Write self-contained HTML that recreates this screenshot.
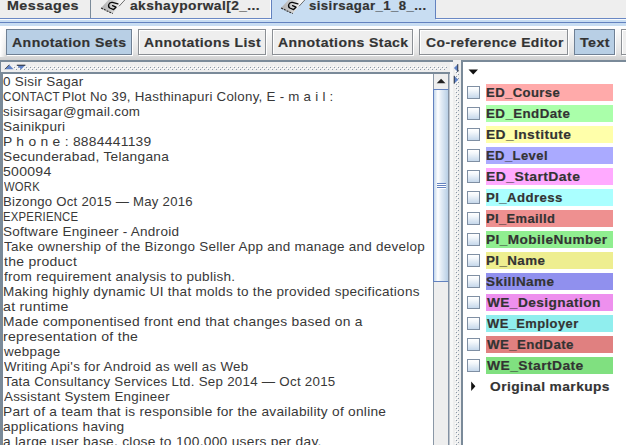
<!DOCTYPE html>
<html>
<head>
<meta charset="utf-8">
<title>GATE</title>
<style>
html,body{margin:0;padding:0;}
html{width:626px;height:445px;overflow:hidden;}
#root{position:absolute;left:0;top:0;width:626px;height:445px;overflow:hidden;background:#eeeeee;}
body{width:626px;height:445px;overflow:hidden;background:#eeeeee;position:relative;font-family:"Liberation Sans",sans-serif;color:#333;}
.abs{position:absolute;}
/* tabs */
.tabbar{position:absolute;left:0;top:0;width:626px;height:18px;background:#eeeeee;}
.tabtxt{position:absolute;-webkit-text-stroke:0.18px #333;top:-3px;font-weight:bold;font-size:13.0px;line-height:18px;white-space:nowrap;color:#333;letter-spacing:0.4px;transform-origin:0 0;}
/* buttons */
.btn{position:absolute;top:29px;height:26px;box-sizing:border-box;border:1px solid #8b8f94;background:#eeeeee;box-shadow:inset 1px 1px 0 #ffffff,1px 1px 0 #ffffff;}
.btn.sel{background:#b8cfe5;border-color:#6f8094;box-shadow:1px 1px 0 #ffffff;}
.btxt{position:absolute;-webkit-text-stroke:0.18px #333;top:33px;font-weight:bold;font-size:13.0px;line-height:18px;white-space:nowrap;color:#333;letter-spacing:0.4px;transform-origin:0 0;}
/* text */
.ln{position:absolute;left:3px;font-size:12.6px;line-height:15px;height:15px;white-space:pre;color:#383838;letter-spacing:0.25px;transform-origin:0 0;}
/* right list */
.cb{position:absolute;left:467px;width:13px;height:13px;box-sizing:border-box;border:1px solid #7f8fa3;background:linear-gradient(#ffffff 0,#f3f7fb 30%,#c6d8eb 100%);}
.lab{position:absolute;left:486px;width:127px;height:17px;}
.ltxt{position:absolute;-webkit-text-stroke:0.18px #333;left:487px;font-weight:bold;font-size:13.0px;line-height:17px;white-space:nowrap;color:#333;letter-spacing:0.4px;transform-origin:0 0;}
</style>
</head>
<body>
<div id="root">
<!-- TAB BAR -->
<div class="tabbar"></div>
<div class="abs" style="left:90px;top:0;width:1px;height:18px;background:#7a8a99;"></div>
<div class="abs" style="left:0;top:18px;width:626px;height:1px;background:#6a88c4;"></div>
<div class="abs" style="left:0;top:19px;width:626px;height:1px;background:#f6f9fd;"></div>
<div class="abs" style="left:0;top:20px;width:626px;height:2px;background:#c8ddf2;"></div>
<div class="abs" style="left:270px;top:0;width:1px;height:18px;background:#ffffff;"></div>
<div class="abs" style="left:271px;top:0;width:165px;height:22px;background:#c8ddf2;"></div>
<div class="abs" style="left:271px;top:0;width:1px;height:19px;background:#6382bf;"></div>
<div class="abs" style="left:435px;top:0;width:1px;height:19px;background:#6382bf;"></div>
<div class="abs" style="left:0;top:22px;width:626px;height:1px;background:#6382bf;"></div>
<div class="abs" style="left:0;top:23px;width:626px;height:3px;background:#c8ddf2;"></div>
<!-- toolbar bg -->
<div class="abs" style="left:0;top:26px;width:626px;height:34px;background:linear-gradient(#ffffff 0,#fbfbfb 10%,#e4e4e4 78%,#cecece 100%);"></div>
<div class="abs" style="left:0;top:26px;width:6px;height:31px;background:linear-gradient(90deg,#ffffff 0,rgba(255,255,255,0) 100%);"></div>
<div class="tabtxt" style="left:6.90px;top:-3px;transform:scaleX(1.1016);">Messages</div>
<div class="tabtxt" style="left:130.00px;top:-3px;transform:scaleX(1.0590);">akshayporwal[2_...</div>
<div class="tabtxt" style="left:308.80px;top:-3px;transform:scaleX(1.0160);">sisirsagar_1_8_...</div>
<!-- doc icons -->
<svg class="abs" style="left:98px;top:0;" width="32" height="17" viewBox="98 0 32 17">
<defs><linearGradient id="ig" gradientUnits="userSpaceOnUse" x1="101" y1="8" x2="124" y2="9"><stop offset="0" stop-color="#adadad"/><stop offset="0.5" stop-color="#d2d2d2"/><stop offset="0.75" stop-color="#efefef"/><stop offset="1" stop-color="#ffffff"/></linearGradient></defs>
<polygon points="101.1,8.1 112.7,13.5 126.2,-1.6 114.6,-7" fill="url(#ig)"/>
<line x1="119" y1="6.3" x2="126.2" y2="-1.6" stroke="#5a5a5a" stroke-width="0.9"/>
<line x1="101.1" y1="8.1" x2="112.7" y2="13.5" stroke="#2a2a2a" stroke-width="1.1" stroke-dasharray="2.1,0.9"/>
<path d="M 117.9 3.8 L 112.5 2.4 Q 109.6 1.9 108.7 4.6 Q 108.1 7.0 109.9 8.0 L 113.6 9.6 L 116.0 7.2 L 112.6 5.6" fill="none" stroke="#0a0a0a" stroke-width="1.35" stroke-linejoin="round" stroke-linecap="round"/>
</svg>
<svg class="abs" style="left:278px;top:0;" width="32" height="17" viewBox="98 0 32 17">
<polygon points="101.1,8.1 112.7,13.5 126.2,-1.6 114.6,-7" fill="url(#ig)"/>
<line x1="119" y1="6.3" x2="126.2" y2="-1.6" stroke="#5a5a5a" stroke-width="0.9"/>
<line x1="101.1" y1="8.1" x2="112.7" y2="13.5" stroke="#2a2a2a" stroke-width="1.1" stroke-dasharray="2.1,0.9"/>
<path d="M 117.9 3.8 L 112.5 2.4 Q 109.6 1.9 108.7 4.6 Q 108.1 7.0 109.9 8.0 L 113.6 9.6 L 116.0 7.2 L 112.6 5.6" fill="none" stroke="#0a0a0a" stroke-width="1.35" stroke-linejoin="round" stroke-linecap="round"/>
</svg>

<!-- BUTTON ROW -->
<div class="btn sel" style="left:6px;width:126px;"></div>
<div class="btn" style="left:138px;width:128px;"></div>
<div class="btn" style="left:272px;width:141px;"></div>
<div class="btn" style="left:419px;width:149px;"></div>
<div class="btn sel" style="left:574px;width:41px;"></div>
<div class="btn" style="left:621px;width:20px;"></div>
<div class="btxt" style="left:12.30px;top:34px;transform:scaleX(1.0829);">Annotation Sets</div>
<div class="btxt" style="left:144.10px;top:34px;transform:scaleX(1.0753);">Annotations List</div>
<div class="btxt" style="left:277.90px;top:34px;transform:scaleX(1.0800);">Annotations Stack</div>
<div class="btxt" style="left:425.60px;top:34px;transform:scaleX(1.0690);">Co-reference Editor</div>
<div class="btxt" style="left:580.00px;top:34px;transform:scaleX(1.0964);">Text</div>
<!-- SPLIT PANE FRAME -->
<div class="abs" style="left:0;top:60px;width:453px;height:2px;background:#7a8a99;"></div>
<div class="abs" style="left:461px;top:60px;width:165px;height:2px;background:#7a8a99;"></div>
<div class="abs" style="left:0;top:60px;width:1px;height:385px;background:#7a8a99;"></div>
<!-- horizontal divider -->
<div class="abs" style="left:1px;top:62px;width:452px;height:10px;background:#eeeeee;"></div>
<svg class="abs" style="left:0;top:62px;" width="453" height="10" viewBox="0 62 453 10" shape-rendering="crispEdges">
<defs><pattern id="hp" x="12" y="66" width="4" height="4" patternUnits="userSpaceOnUse">
<rect x="1" y="0" width="1" height="1" fill="#ffffff"/><rect x="2" y="1" width="1" height="1" fill="#8a97a6"/>
<rect x="3" y="2" width="1" height="1" fill="#ffffff"/><rect x="0" y="3" width="1" height="1" fill="#8a97a6"/></pattern></defs>
<rect x="13" y="66" width="434" height="4" fill="url(#hp)"/>
</svg>
<svg class="abs" style="left:0;top:62px;" width="30" height="10" viewBox="0 62 30 10">
<polygon points="4.8,69.2 9.2,64.7 13.6,69.2" fill="#5f82c6"/><line x1="4.8" y1="69.2" x2="9.2" y2="64.7" stroke="#333" stroke-width="0.8"/>
<polygon points="16.8,65 25.4,65 21.1,69.4" fill="#5f82c6"/><line x1="16.8" y1="65.2" x2="25.4" y2="65.2" stroke="#222" stroke-width="0.9"/>
</svg>
<!-- text area scroll pane -->
<div class="abs" style="left:0;top:72px;width:450px;height:373px;background:#7a8a99;"></div>
<div class="abs" style="left:449px;top:74px;width:1px;height:371px;background:#bcc3cb;"></div>
<div class="abs" style="left:3px;top:74px;width:430px;height:371px;background:#ffffff;"></div>
<!-- vertical divider -->
<div class="abs" style="left:450px;top:62px;width:3px;height:383px;background:#f7f7f7;"></div>
<div class="abs" style="left:453px;top:60px;width:8px;height:385px;background:#eeeeee;"></div>
<svg class="abs" style="left:453px;top:60px;" width="8" height="385" viewBox="453 60 8 385" shape-rendering="crispEdges">
<defs><pattern id="vp" x="455" y="72" width="4" height="4" patternUnits="userSpaceOnUse">
<rect x="0" y="3" width="1" height="1" fill="#ffffff"/><rect x="1" y="0" width="1" height="1" fill="#8a97a6"/>
<rect x="2" y="1" width="1" height="1" fill="#ffffff"/><rect x="3" y="2" width="1" height="1" fill="#8a97a6"/></pattern></defs>
<rect x="455" y="70" width="4" height="375" fill="url(#vp)"/>
</svg>
<svg class="abs" style="left:452px;top:60px;" width="10" height="30" viewBox="452 60 10 30">
<polygon points="458,64.1 458,72 453.9,68" fill="#5f82c6"/><line x1="457.8" y1="64.1" x2="457.8" y2="72" stroke="#222" stroke-width="0.8"/>
<polygon points="454,75.8 454,83.7 458.4,79.8" fill="#5f82c6"/><line x1="454.2" y1="75.8" x2="454.2" y2="83.7" stroke="#222" stroke-width="0.8"/>
</svg>
<!-- right panel -->
<div class="abs" style="left:461px;top:60px;width:2px;height:385px;background:#7a8a99;"></div>
<div class="abs" style="left:463px;top:62px;width:163px;height:383px;background:#ffffff;"></div>

<!-- scrollbar -->
<div class="abs" style="left:433px;top:74px;width:16px;height:371px;background:#eeeeee;border-left:1px solid #8a97a6;border-right:1px solid #8391a2;box-sizing:border-box;"></div>
<svg class="abs" style="left:436px;top:78px;" width="10" height="6" viewBox="0 0 10 6"><polygon points="0.7,5.3 5.1,0.8 9.5,5.3" fill="#222"/></svg>
<div class="abs" style="left:433px;top:89px;width:16px;height:193px;box-sizing:border-box;border:1px solid #6382bf;border-right-color:#8391a2;background:linear-gradient(90deg,#c4d7eb 0%,#ffffff 28%,#e4edf6 50%,#b8cfe5 100%);"></div>
<div class="abs" style="left:437px;top:183px;width:9px;height:6px;background:repeating-linear-gradient(#6382bf 0,#6382bf 1px,#ffffff 1px,#ffffff 2px);"></div>

<!-- TEXT LINES -->
<div class="ln" style="left:2.60px;top:75px;transform:scaleX(1.0668);">0 Sisir Sagar</div>
<div class="ln" style="left:2.60px;top:90px;transform:scaleX(0.9234);">CONTACT</div>
<div class="ln" style="left:62.40px;top:90px;transform:scaleX(1.0569);">Plot No 39, Hasthinapuri Colony, E - m a i l :</div>
<div class="ln" style="left:2.60px;top:105px;transform:scaleX(1.0638);">sisirsagar@gmail.com</div>
<div class="ln" style="left:2.60px;top:120px;transform:scaleX(1.0787);">Sainikpuri</div>
<div class="ln" style="left:2.60px;top:135px;transform:scaleX(1.0978);">P h o n e : 8884441139</div>
<div class="ln" style="left:2.60px;top:150px;transform:scaleX(1.0887);">Secunderabad, Telangana</div>
<div class="ln" style="left:2.60px;top:165px;transform:scaleX(1.1144);">500094</div>
<div class="ln" style="left:3.60px;top:180px;transform:scaleX(0.8926);">WORK</div>
<div class="ln" style="left:2.60px;top:195px;transform:scaleX(1.0446);">Bizongo Oct 2015 — May 2016</div>
<div class="ln" style="left:2.60px;top:210px;transform:scaleX(0.9000);">EXPERIENCE</div>
<div class="ln" style="left:2.60px;top:225px;transform:scaleX(1.0728);">Software Engineer - Android</div>
<div class="ln" style="left:3.60px;top:240px;transform:scaleX(1.0692);">Take ownership of the Bizongo Seller App and manage and develop</div>
<div class="ln" style="left:3.60px;top:255px;transform:scaleX(1.1108);">the product</div>
<div class="ln" style="left:3.60px;top:270px;transform:scaleX(1.0757);">from requirement analysis to publish.</div>
<div class="ln" style="left:2.60px;top:285px;transform:scaleX(1.0754);">Making highly dynamic UI that molds to the provided specifications</div>
<div class="ln" style="left:2.60px;top:300px;transform:scaleX(1.1228);">at runtime</div>
<div class="ln" style="left:2.60px;top:315px;transform:scaleX(1.0963);">Made componentised front end that changes based on a</div>
<div class="ln" style="left:2.60px;top:330px;transform:scaleX(1.1193);">representation of the</div>
<div class="ln" style="left:3.60px;top:345px;transform:scaleX(1.0674);">webpage</div>
<div class="ln" style="left:3.60px;top:360px;transform:scaleX(1.0578);">Writing Api&#x27;s for Android as well as Web</div>
<div class="ln" style="left:3.60px;top:375px;transform:scaleX(1.0573);">Tata Consultancy Services Ltd. Sep 2014 — Oct 2015</div>
<div class="ln" style="left:3.60px;top:390px;transform:scaleX(1.0583);">Assistant System Engineer</div>
<div class="ln" style="left:2.60px;top:405px;transform:scaleX(1.0880);">Part of a team that is responsible for the availability of online</div>
<div class="ln" style="left:2.60px;top:420px;transform:scaleX(1.0855);">applications having</div>
<div class="ln" style="left:2.60px;top:435px;transform:scaleX(1.0927);">a large user base, close to 100,000 users per day.</div>

<!-- RIGHT LIST -->
<svg class="abs" style="left:468px;top:69px;" width="11" height="6" viewBox="0 0 11 6"><polygon points="0.5,0.5 10,0.5 5.25,5.5" fill="#111"/></svg>
<div class="cb" style="top:86px;"></div><div class="lab" style="top:84px;background:#ffaaaa;"></div>
<div class="ltxt" style="left:486.00px;top:84px;transform:scaleX(1.0070);">ED_Course</div>
<div class="cb" style="top:107px;"></div><div class="lab" style="top:105px;background:#aaffaa;"></div>
<div class="ltxt" style="left:486.00px;top:105px;transform:scaleX(1.0275);">ED_EndDate</div>
<div class="cb" style="top:128px;"></div><div class="lab" style="top:126px;background:#ffffaa;"></div>
<div class="ltxt" style="left:486.00px;top:126px;transform:scaleX(1.0582);">ED_Institute</div>
<div class="cb" style="top:149px;"></div><div class="lab" style="top:147px;background:#aaaaff;"></div>
<div class="ltxt" style="left:486.00px;top:147px;transform:scaleX(1.0035);">ED_Level</div>
<div class="cb" style="top:170px;"></div><div class="lab" style="top:168px;background:#ffaaff;"></div>
<div class="ltxt" style="left:486.00px;top:168px;transform:scaleX(1.0733);">ED_StartDate</div>
<div class="cb" style="top:191px;"></div><div class="lab" style="top:189px;background:#aaffff;"></div>
<div class="ltxt" style="left:486.00px;top:189px;transform:scaleX(1.0176);">PI_Address</div>
<div class="cb" style="top:212px;"></div><div class="lab" style="top:210px;background:#ee9090;"></div>
<div class="ltxt" style="left:486.00px;top:210px;transform:scaleX(0.9927);">PI_EmailId</div>
<div class="cb" style="top:233px;"></div><div class="lab" style="top:231px;background:#90ee90;"></div>
<div class="ltxt" style="left:486.00px;top:231px;transform:scaleX(1.0500);">PI_MobileNumber</div>
<div class="cb" style="top:254px;"></div><div class="lab" style="top:252px;background:#eeee90;"></div>
<div class="ltxt" style="left:486.00px;top:252px;transform:scaleX(1.0269);">PI_Name</div>
<div class="cb" style="top:275px;"></div><div class="lab" style="top:273px;background:#9090ee;"></div>
<div class="ltxt" style="left:486.00px;top:273px;transform:scaleX(1.0407);">SkillName</div>
<div class="cb" style="top:296px;"></div><div class="lab" style="top:294px;background:#ee90ee;"></div>
<div class="ltxt" style="left:487.00px;top:294px;transform:scaleX(1.0514);">WE_Designation</div>
<div class="cb" style="top:317px;"></div><div class="lab" style="top:315px;background:#90eeee;"></div>
<div class="ltxt" style="left:487.00px;top:315px;transform:scaleX(0.9979);">WE_Employer</div>
<div class="cb" style="top:338px;"></div><div class="lab" style="top:336px;background:#e08080;"></div>
<div class="ltxt" style="left:487.00px;top:336px;transform:scaleX(1.0227);">WE_EndDate</div>
<div class="cb" style="top:359px;"></div><div class="lab" style="top:357px;background:#80e080;"></div>
<div class="ltxt" style="left:487.00px;top:357px;transform:scaleX(1.0656);">WE_StartDate</div>
<div class="ltxt" style="left:490.00px;top:378px;transform:scaleX(1.0584);">Original markups</div>
<svg class="abs" style="left:470px;top:380px;" width="8" height="12" viewBox="470 380 8 12"><polygon points="471.2,381.6 471.2,391 475.4,386.3" fill="#111"/></svg>

</div>
</body>
</html>
